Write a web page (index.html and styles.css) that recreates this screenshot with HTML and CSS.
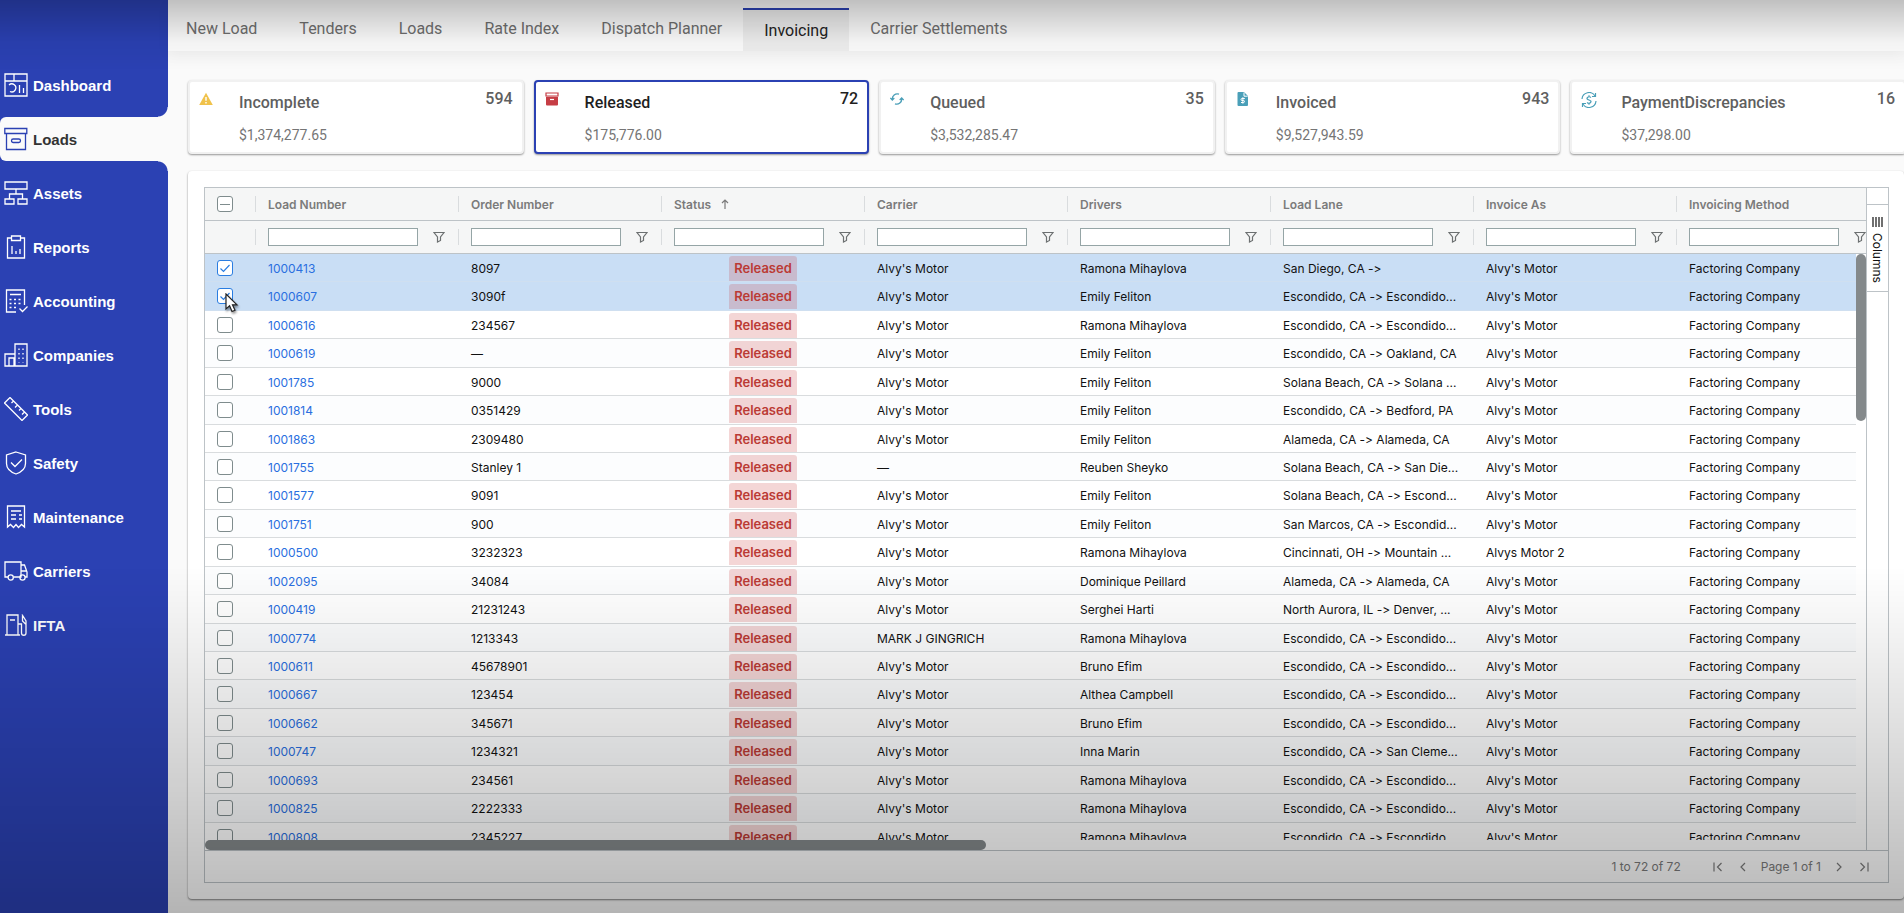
FILE: index.html
```html
<!DOCTYPE html>
<html lang="en">
<head>
<meta charset="utf-8">
<title>Invoicing</title>
<link rel="stylesheet" href="styles.css">
</head>
<body>
<aside class="sidebar">
  <nav class="side-nav" aria-label="Main">
    <a class="side-link" href="#"><svg class="side-icon" viewBox="0 0 24 24"><path d="M1 1h22v22H1zM1 8h22M10 1v7M5 12a4 4 0 1 1 1 6.500M15.500 12v8M19.500 15v5"/></svg>Dashboard</a>
    <a class="side-link active" href="#"><svg class="side-icon" viewBox="0 0 24 24"><path d="M.8 1.500h22v5H.8zM2.500 6.500v16h19v-16"/><rect x="7.500" y="12" width="9" height="3.500" rx="1.700"/></svg>Loads</a>
    <a class="side-link" href="#"><svg class="side-icon" viewBox="0 0 24 24"><path d="M1 1h22v7H1zM12 8v5M5.500 18v-5h13v5M1 18h9v5H1zM14 18h9v5h-9z"/></svg>Assets</a>
    <a class="side-link" href="#"><svg class="side-icon" viewBox="0 0 24 24"><path d="M7 3H3.500v20h17V3H17M7.500 1h9v4.500h-9zM8 11v8M12 16v3M16 14v5"/></svg>Reports</a>
    <a class="side-link" href="#"><svg class="side-icon" viewBox="0 0 24 24"><path d="M12 23H2.500V1h18v15M15.500 19.500l3 3 5-5M6 5.500h11"/><path stroke-dasharray="2 2.500" d="M5.500 10.500h12M5.500 14.500h12M5.500 18.500h8"/></svg>Accounting</a>
    <a class="side-link" href="#"><svg class="side-icon" viewBox="0 0 24 24"><path d="M11 23V1h12v22zM11 11H1v12h10M5 23v-8h5v8"/><path stroke-dasharray="1.500 3" d="M15 5.500v14M19 5.500v14"/></svg>Companies</a>
    <a class="side-link" href="#"><svg class="side-icon" viewBox="0 0 24 24"><path d="M6 .5L23.500 18 18 23.500.500 6zM9.500 4l-2 2M13.500 8l-2.500 2.500M17 11.500l-2 2M20.500 15L18 17.500"/></svg>Tools</a>
    <a class="side-link" href="#"><svg class="side-icon" viewBox="0 0 24 24"><path d="M12 1l9.500 3v8.500c0 5-4 8.500-9.500 10.500-5.500-2-9.500-5.500-9.500-10.500V4zM7 11.500l4 4 7-7"/></svg>Safety</a>
    <a class="side-link" href="#"><svg class="side-icon" viewBox="0 0 24 24"><path d="M3.500 22V1h17v21l-3-2.500-3 3-2.500-3-2.500 3-3-3zM7 6h10M7 10h5M7 14h5M15 10h3M15 14h3"/></svg>Maintenance</a>
    <a class="side-link" href="#"><svg class="side-icon" viewBox="0 0 24 24"><path d="M4 18H1V3h16v15H9.500M17 6h3.500l2.500 7v5h-2M17 12h5.500"/><circle cx="6.700" cy="18.500" r="2.600"/><circle cx="18.500" cy="18.500" r="2.600"/></svg>Carriers</a>
    <a class="side-link" href="#"><svg class="side-icon" viewBox="0 0 24 24"><path d="M3 22V2h11v20M1 22h15M6 7h5M14 11h3.500v9c0 3 4.500 3 4.500 0V8l-4-6.500M18.500 3v5l3 3"/></svg>IFTA</a>
  </nav>
</aside>
<main class="main">
  <nav class="tabs" aria-label="Loads sections">
    <a class="tab" href="#">New Load</a>
    <a class="tab" href="#">Tenders</a>
    <a class="tab" href="#">Loads</a>
    <a class="tab" href="#">Rate Index</a>
    <a class="tab" href="#">Dispatch Planner</a>
    <a class="tab current" href="#" aria-current="page">Invoicing</a>
    <a class="tab" href="#">Carrier Settlements</a>
  </nav>
  <div class="content">
    <section class="cards" aria-label="Invoice status">
      <button class="card" type="button">
        <svg class="card-icon yellow" viewBox="0 0 14 14"><path d="M7 .8L13.800 13H.2z" fill="currentColor"/><path d="M7 5v3.800M7 10v1.500" stroke="#fff" stroke-width="1.400"/></svg>
        <span class="card-text"><span class="card-title">Incomplete</span><span class="card-sum">$1,374,277.65</span></span><span class="card-count">594</span>
      </button>
      <button class="card selected" type="button">
        <svg class="card-icon red" viewBox="0 0 14 14"><path d="M1 4.800h12v7.700q0 1-1 1H2q-1 0-1-1z" fill="currentColor"/><path d="M1 1h12v3H1z" fill="none" stroke="currentColor" stroke-width="1.200"/><path d="M5 7.500h4" stroke="#fff" stroke-width="1.200"/></svg>
        <span class="card-text"><span class="card-title">Released</span><span class="card-sum">$175,776.00</span></span><span class="card-count">72</span>
      </button>
      <button class="card" type="button">
        <svg class="card-icon teal" viewBox="0 0 14 14" fill="none" stroke="currentColor" stroke-width="1.300"><path d="M9 2.200A5 5 0 0 0 2.300 7.500M5 11.800A5 5 0 0 0 11.700 6.500M.3 6l2 2 2-2M9.700 8l2-2 2 2"/></svg>
        <span class="card-text"><span class="card-title">Queued</span><span class="card-sum">$3,532,285.47</span></span><span class="card-count">35</span>
      </button>
      <button class="card" type="button">
        <svg class="card-icon teal" viewBox="0 0 14 14"><path d="M2.500 0H8l4 4v9q0 1-1 1H2.500q-1 0-1-1V1q0-1 1-1z" fill="currentColor"/><path d="M8 .5v3.700h3.700M8.800 6.500H6q-1 0-1 1t1 1h1.500q1 0 1 1t-1 1H5M6.900 5.200v6.500" fill="none" stroke="#fff"/></svg>
        <span class="card-text"><span class="card-title">Invoiced</span><span class="card-sum">$9,527,943.59</span></span><span class="card-count">943</span>
      </button>
      <button class="card" type="button">
        <svg class="card-icon teal large" viewBox="0 0 16 16" fill="none" stroke="currentColor" stroke-width="1.200"><path d="M1 7a7 7 0 0 1 13-3M14.500 1v3.500H11M15 9a7 7 0 0 1-13 3M1.500 15v-3.500H5M10 5.500Q8 4 6.500 5.500T8 8t1.500 2.500-3.500 0M8 3.300v1.200M8 11.500v1.300"/></svg>
        <span class="card-text"><span class="card-title">PaymentDiscrepancies</span><span class="card-sum">$37,298.00</span></span><span class="card-count">16</span>
      </button>
    </section>
    <section class="panel">
      <div class="grid">
        <div class="grid-body">
          <div class="viewport">
            <table class="table">
              <thead>
                <tr class="head-row" id="head"></tr>
                <tr class="filter-row" id="filters"></tr>
              </thead>
              <tbody id="rows"></tbody>
            </table>
            <div class="track-y"><div class="thumb-y"></div></div>
            <div class="track-x"><div class="thumb-x"></div></div>
            <svg class="pointer" viewBox="0 0 14 20"><path d="M1 1v15l3.600-3.200L7 18.500l3-1.300-2.500-5.400H12z" fill="#fff" stroke="#222" stroke-width="1.200"/></svg>
          </div>
          <div class="tools">
            <button class="tools-button" type="button"><svg class="tools-icon" viewBox="0 0 11 10"><path d="M1 0v10M4 0v10M7 0v10M10 0v10" stroke="currentColor" stroke-width="1.200"/></svg>Columns</button>
          </div>
        </div>
        <footer class="pager">
          <span class="pager-range">1 to 72 of 72</span>
          <button class="pager-button" type="button" aria-label="First page"><svg viewBox="0 0 10 10"><path d="M1 .5v9M8.500 1l-4 4 4 4"/></svg></button>
          <button class="pager-button" type="button" aria-label="Previous page"><svg viewBox="0 0 10 10"><path d="M7 1L3 5l4 4"/></svg></button>
          <span class="pager-page">Page 1 of 1</span>
          <button class="pager-button" type="button" aria-label="Next page"><svg viewBox="0 0 10 10"><path d="M3 1l4 4-4 4"/></svg></button>
          <button class="pager-button" type="button" aria-label="Last page"><svg viewBox="0 0 10 10"><path d="M9 .5v9M1.500 1l4 4-4 4"/></svg></button>
        </footer>
      </div>
    </section>
  </div>
</main>
<div class="shade"></div>
<script src="app.js"></script>
</body>
</html>
```
FILE: styles.css
```css
* { box-sizing: border-box; }
html, body { height: 100%; }
body {
  margin: 0;
  display: flex;
  overflow: hidden;
  background: #fafafa;
  font-family: Roboto, sans-serif;
}
a { color: inherit; text-decoration: none; }
button { margin: 0; padding: 0; border: 0; background: none; font: inherit; color: inherit; text-align: left; }

.sidebar { flex: none; width: 168px; padding-top: 63px; background: #2b41b3; }
.side-nav { display: flex; flex-direction: column; gap: 10px; }
.side-link {
  position: relative;
  display: flex;
  align-items: center;
  gap: 5px;
  height: 44px;
  padding-left: 4px;
  color: #fff;
  font: bold 15px "Liberation Sans", Arial, sans-serif;
}
.side-icon { width: 24px; height: 24px; fill: none; stroke: currentColor; stroke-width: 1.3; }
.side-link.active { background: #fafafa; color: #333; border-radius: 6px 0 0 6px; }
.side-link.active .side-icon { color: #2b41b3; }
.side-link.active::before, .side-link.active::after {
  content: "";
  position: absolute;
  right: 0;
  width: 10px;
  height: 10px;
}
.side-link.active::before { top: -10px; background: radial-gradient(circle at 0 0, #2b41b3 9px, #fafafa 10px); }
.side-link.active::after { bottom: -10px; background: radial-gradient(circle at 0 100%, #2b41b3 9px, #fafafa 10px); }

.main { flex: 1; min-width: 0; display: flex; flex-direction: column; }
.tabs { display: flex; align-items: flex-end; height: 51px; flex: none; background: #fdfdfd; box-shadow: 0 4px 14px rgba(0, 0, 0, .04); }
.tab { padding: 0 21px; line-height: 44px; font-size: 16px; color: #6f6f6f; white-space: nowrap; }
.tab:first-child { padding-left: 18px; }
.tab.current { height: 43px; line-height: 42px; border-top: 2px solid #2b41b3; background: #f0f0f0; color: #222; }

.content { flex: 1; min-height: 0; display: flex; flex-direction: column; gap: 17px; padding: 29px 0 14px 20px; }
.cards { display: grid; grid-template-columns: repeat(5, minmax(0, 1fr)); gap: 10px; margin-right: -2px; }
.card {
  display: flex;
  height: 74px;
  padding: 10px 9px 0 9px;
  border: 2px solid #f1f1f1;
  border-radius: 4px;
  background: #fff;
  box-shadow: 0 1px 2px rgba(0, 0, 0, .4);
  color: #5f5f5f;
}
.card.selected { border-color: #2b41b3; color: #1f1f1f; }
.card-icon { flex: none; width: 14px; height: 14px; }
.card-icon.large { width: 16px; height: 16px; }
.card-text { display: flex; flex-direction: column; gap: 12px; width: 0; flex: 1; margin-left: 26px; }
.card-icon.large + .card-text { margin-left: 24px; }
.card-title { font-size: 16px; font-weight: 500; line-height: 22px; }
.card-sum { font-size: 14px; line-height: 18px; color: #757575; }
.card-count { font-size: 16px; font-weight: 500; line-height: 14px; }
.yellow { color: #f0c24b; }
.red { color: #c63d45; }
.teal { color: #4a9fb8; }

.panel {
  flex: 1;
  min-height: 0;
  display: flex;
  padding: 16px 15px 16px 16px;
  border-radius: 4px;
  background: #fff;
  box-shadow: 0 1px 2px rgba(0, 0, 0, .5);
}
.grid { flex: 1; min-width: 0; display: flex; flex-direction: column; border: 1px solid #bdc3c7; font-family: Inter, sans-serif; font-size: 12px; }
.grid-body { flex: 1; min-height: 0; display: flex; }
.viewport { position: relative; flex: 1; min-width: 0; overflow: hidden; }
.table { table-layout: fixed; border-collapse: separate; border-spacing: 0; width: 1675px; font-variant-ligatures: none; font-feature-settings: "calt" 0; }
.table th, .table td { padding: 0 4px 0 12px; text-align: left; white-space: nowrap; overflow: hidden; }
.table .pick { width: 51px; padding: 0 0 0 12px; }
.head-row th, .filter-row td { height: 33px; background: linear-gradient(#d9dcde, #d9dcde) right center / 1px 16px no-repeat #f5f6f6; border-bottom: 1px solid #bdc3c7; }
.head-row th { color: #7b7b7b; font-weight: 600; }
.sort { width: 8px; height: 10px; margin-left: 10px; fill: none; stroke: currentColor; stroke-width: 1.2; }
.filter { display: flex; align-items: center; justify-content: space-between; padding-right: 10px; }
.filter-input { width: 150px; height: 18px; padding: 0 4px; border: 1px solid #95a5a6; background: #fff; font: inherit; }
.filter-button { display: flex; }
.filter-button svg { width: 12px; height: 12px; fill: none; stroke: #6c7071; stroke-width: 1.2; }
tbody tr td { height: 28px; border-bottom: 1px solid #d9dcde; color: #111; }
.table tbody td { padding-top: 1px; }
tbody tr:nth-child(7n+2) td, tbody tr:nth-child(7n+4) td, tbody tr:nth-child(7n+6) td { height: 29px; }
tbody tr:nth-child(even) { background: #fcfdfe; }
tbody tr.picked { background: #c9def5; }
tbody tr.picked td { border-bottom-color: #cfdff0; }
.load-link { color: #2a6fe0; }
.table .badge-cell { padding-left: 3px; text-align: center; }
.badge { display: inline-block; width: 68px; line-height: 25px; border-radius: 3px 3px 0 0; background: rgba(200, 50, 50, .2); color: #bb3a34; font-size: 13px; font-weight: 600; text-align: center; vertical-align: top; }
.box { appearance: none; display: block; width: 16px; height: 16px; margin: 0; border: 1px solid #7f8c8d; border-radius: 3px; background: #fff center / 12px 12px no-repeat; }
.box:checked { border-color: #2a7de1; background-image: url('data:image/svg+xml,<svg xmlns="http://www.w3.org/2000/svg" viewBox="0 0 12 12"><path d="M1.500 6.500l3 3 6-6.500" fill="none" stroke="%232a7de1" stroke-width="1.200"/></svg>'); }
.box:indeterminate { background-image: linear-gradient(#7f8c8d, #7f8c8d); background-size: 10px 1px; }

.track-y { position: absolute; top: 66px; right: 0; bottom: 0; width: 10px; background: #fff; }
.thumb-y { height: 28%; border-radius: 5px; background: #84898b; }
.track-x { position: absolute; left: 0; right: 0; bottom: 0; height: 10px; background: #fff; }
.thumb-x { width: 47%; height: 10px; border-radius: 5px; background: #84898b; }
.pointer { position: absolute; left: 20px; top: 105px; width: 14px; height: 20px; filter: drop-shadow(1px 2px 1px rgba(0, 0, 0, .4)); }

.tools { flex: none; width: 22px; padding-top: 16px; border-left: 1px solid #bdc3c7; }
.tools-button { display: flex; align-items: center; gap: 6px; width: 100%; height: 88px; padding: 12px 0 0; border: solid #bdc3c7; border-width: 1px 0; writing-mode: vertical-rl; font-size: 12px; color: #111; }
.tools-icon { width: 11px; height: 10px; }

.pager { flex: none; display: flex; align-items: center; justify-content: flex-end; height: 32px; padding-right: 19px; border-top: 1px solid #bdc3c7; color: #7b7b7b; }
.pager-button { display: flex; }
.pager-button svg { width: 10px; height: 10px; fill: none; stroke: currentColor; stroke-width: 1.2; }
.pager-range { margin-right: 32px; }
.pager-page { margin: 0 13px; }
.pager-button + .pager-button { margin-left: 15px; }

.shade {
  position: fixed;
  inset: 0;
  pointer-events: none;
  background:
    linear-gradient(rgba(0, 0, 0, .24), rgba(0, 0, 0, .18) 12px, rgba(0, 0, 0, .04) 42px, transparent 70px),
    linear-gradient(transparent 62%, rgba(0, 0, 0, .04) 68%, rgba(0, 0, 0, .17) 86%, rgba(0, 0, 0, .28));
}
```
FILE: app.js
```js
const columns = ["Load Number", "Order Number", "Status", "Carrier", "Drivers", "Load Lane", "Invoice As", "Invoicing Method"];
const A = "Alvy's Motor", R = "Ramona Mihaylova", E = "Emily Feliton", B = "Bruno Efim";
const ESC = "Escondido, CA -> Escondido...";
const loads = [
  ["1000413", "8097", A, R, "San Diego, CA ->"],
  ["1000607", "3090f", A, E, ESC],
  ["1000616", "234567", A, R, ESC],
  ["1000619", "—", A, E, "Escondido, CA -> Oakland, CA"],
  ["1001785", "9000", A, E, "Solana Beach, CA -> Solana ..."],
  ["1001814", "0351429", A, E, "Escondido, CA -> Bedford, PA"],
  ["1001863", "2309480", A, E, "Alameda, CA -> Alameda, CA"],
  ["1001755", "Stanley 1", "—", "Reuben Sheyko", "Solana Beach, CA -> San Die..."],
  ["1001577", "9091", A, E, "Solana Beach, CA -> Escond..."],
  ["1001751", "900", A, E, "San Marcos, CA -> Escondid..."],
  ["1000500", "3232323", A, R, "Cincinnati, OH -> Mountain ...", "Alvys Motor 2"],
  ["1002095", "34084", A, "Dominique Peillard", "Alameda, CA -> Alameda, CA"],
  ["1000419", "21231243", A, "Serghei Harti", "North Aurora, IL -> Denver, ..."],
  ["1000774", "1213343", "MARK J GINGRICH", R, ESC],
  ["1000611", "45678901", A, B, ESC],
  ["1000667", "123454", A, "Althea Campbell", ESC],
  ["1000662", "345671", A, B, ESC],
  ["1000747", "1234321", A, "Inna Marin", "Escondido, CA -> San Cleme..."],
  ["1000693", "234561", A, R, ESC],
  ["1000825", "2222333", A, R, ESC],
  ["1000808", "2345227", A, R, ESC]
];
const arrow = '<svg class="sort" viewBox="0 0 8 10"><path d="M4 10V1M1 4l3-3 3 3"/></svg>';
const funnel = '<svg viewBox="0 0 12 12"><path d="M1 1.500h10L7.500 6v3.500l-3 1.500V6z"/></svg>';

document.getElementById("head").innerHTML =
  '<th class="pick"><input class="box" type="checkbox" id="all" aria-label="Select all"></th>' +
  columns.map(c => `<th scope="col">${c}${c === "Status" ? arrow : ""}</th>`).join("");
document.getElementById("all").indeterminate = true;

document.getElementById("filters").innerHTML = '<td class="pick"></td>' +
  columns.map(c => `<td><div class="filter"><input class="filter-input" type="text" aria-label="${c} filter"><button class="filter-button" type="button" aria-label="${c} filter menu">${funnel}</button></div></td>`).join("");

document.getElementById("rows").innerHTML = loads.map(([id, order, carrier, driver, lane, as = A], i) =>
  `<tr class="${i < 2 ? "picked" : ""}">
    <td class="pick"><input class="box" type="checkbox" aria-label="Select ${id}"${i < 2 ? " checked" : ""}></td>
    <td><a class="load-link" href="#">${id}</a></td><td>${order}</td>
    <td class="badge-cell"><span class="badge">Released</span></td>
    <td>${carrier}</td><td>${driver}</td><td>${lane}</td><td>${as}</td><td>Factoring Company</td>
  </tr>`).join("");
```
